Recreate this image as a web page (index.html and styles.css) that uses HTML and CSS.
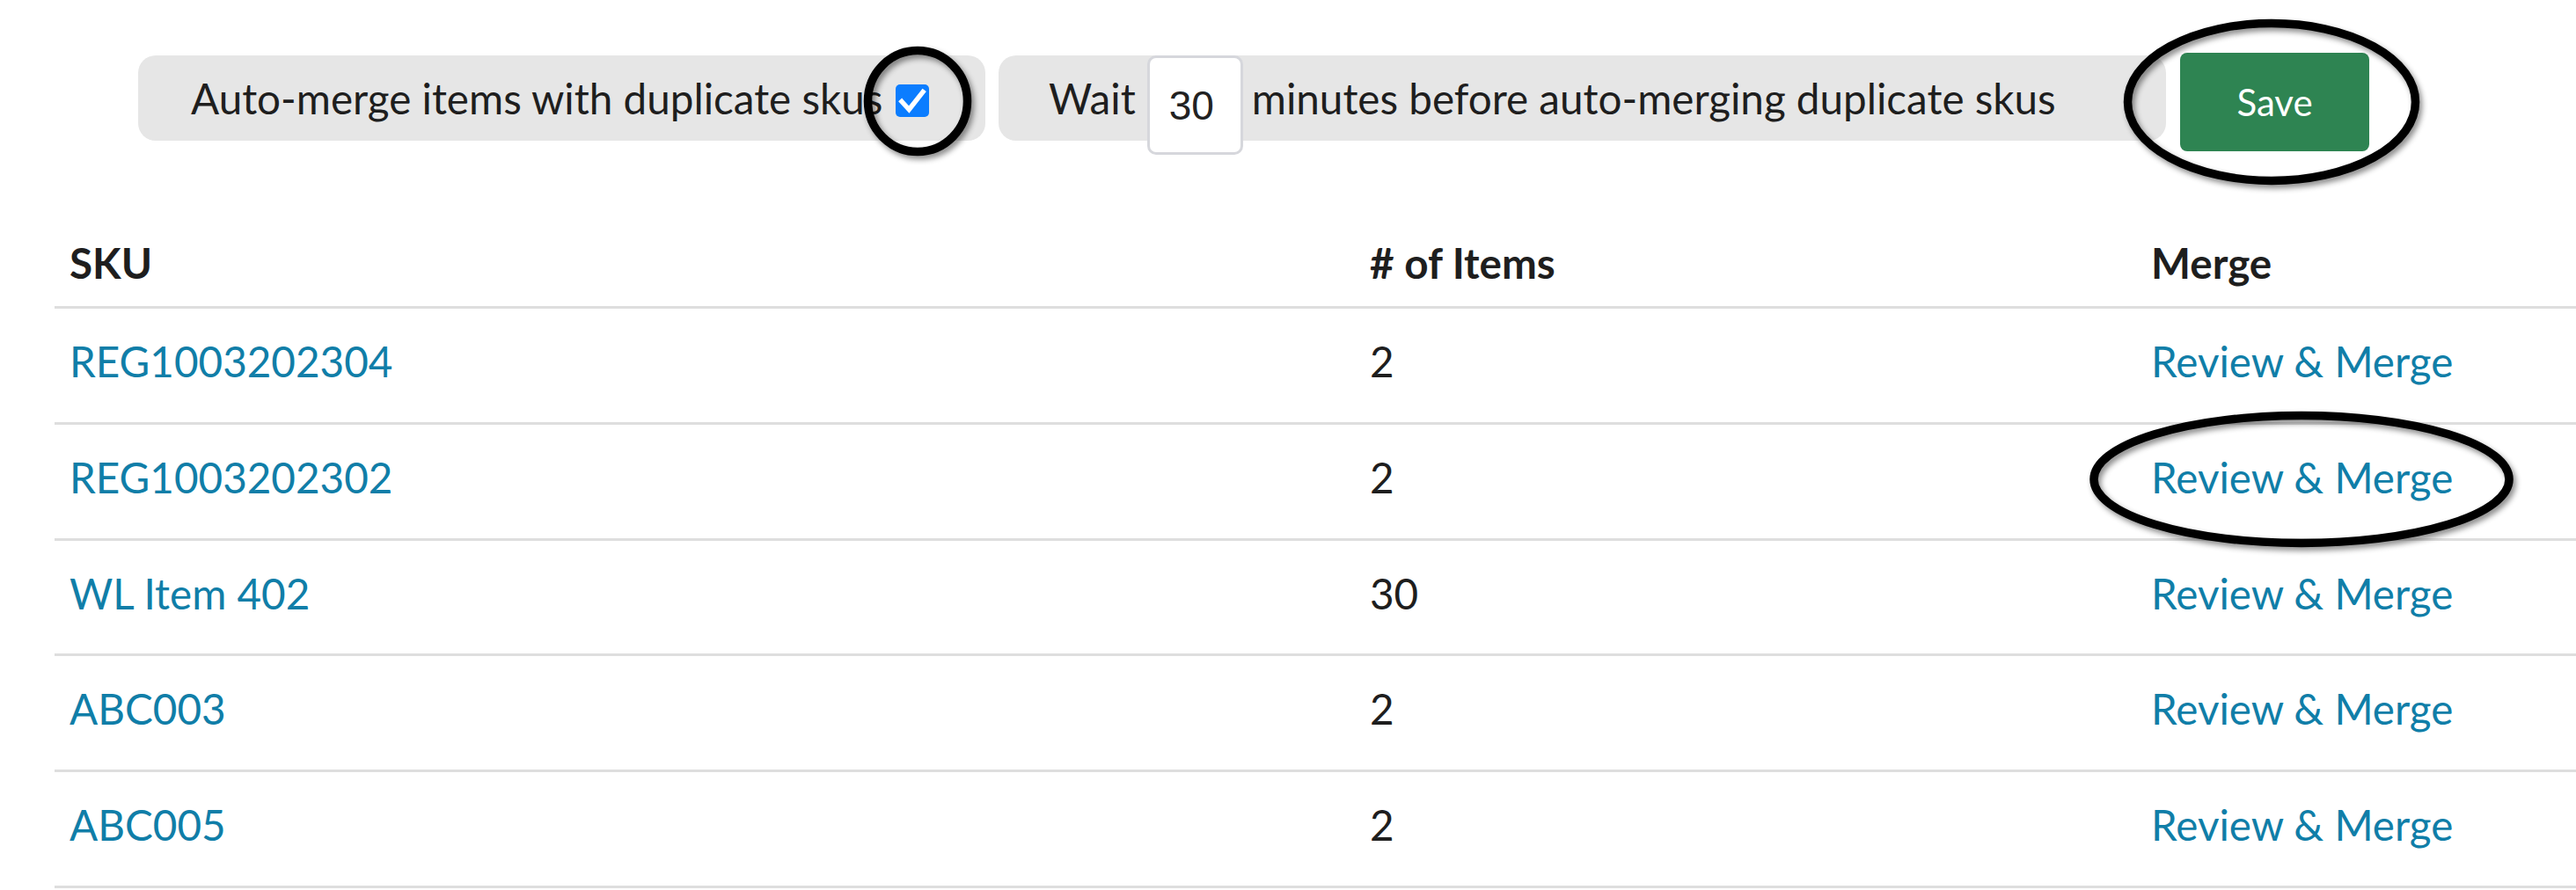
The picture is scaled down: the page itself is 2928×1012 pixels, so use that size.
FILE: index.html
```html
<!DOCTYPE html>
<html lang="en">
<head>
<meta charset="utf-8">
<title>Duplicate SKUs</title>
<link rel="stylesheet" href="styles.css">
</head>
<body>
<div class="page">
  <div class="toolbar">
    <label class="pill pill-auto">
      <span class="pill-text">Auto-merge items with duplicate skus</span>
      <span class="checkbox" role="checkbox" aria-checked="true">
        <svg viewBox="0 0 38 37" width="38" height="37"><path d="M7 19.5 L15.3 28.5 L31 8.5" fill="none" stroke="#fff" stroke-width="5.5" stroke-linecap="square" stroke-linejoin="miter"/></svg>
      </span>
    </label>
    <div class="pill pill-wait">
      <span class="pill-text">Wait</span>
      <input class="minutes" type="text" value="30">
      <span class="pill-text pill-text-after">minutes before auto-merging duplicate skus</span>
    </div>
    <button class="save" type="button">Save</button>
  </div>

  <table class="skus">
    <colgroup>
      <col class="c-sku">
      <col class="c-count">
      <col class="c-merge">
    </colgroup>
    <thead>
      <tr><th>SKU</th><th># of Items</th><th>Merge</th></tr>
    </thead>
    <tbody>
      <tr><td><a href="#">REG1003202304</a></td><td>2</td><td><a href="#">Review &amp; Merge</a></td></tr>
      <tr><td><a href="#">REG1003202302</a></td><td>2</td><td><a href="#">Review &amp; Merge</a></td></tr>
      <tr><td><a href="#">WL Item 402</a></td><td>30</td><td><a href="#">Review &amp; Merge</a></td></tr>
      <tr><td><a href="#">ABC003</a></td><td>2</td><td><a href="#">Review &amp; Merge</a></td></tr>
      <tr><td><a href="#">ABC005</a></td><td>2</td><td><a href="#">Review &amp; Merge</a></td></tr>
    </tbody>
  </table>

  <svg class="mark mark-check" width="140" height="140" viewBox="0 0 140 140"><ellipse cx="61" cy="62" rx="56.5" ry="57.5"/></svg>
  <svg class="mark mark-save" width="350" height="205" viewBox="0 0 350 205"><ellipse cx="168" cy="94" rx="163.5" ry="89.5"/></svg>
  <svg class="mark mark-row" width="500" height="175" viewBox="0 0 500 175"><ellipse cx="241" cy="77" rx="236" ry="72.5"/></svg>
</div>
</body>
</html>
```

FILE: styles.css
```css
html, body {
  margin: 0;
  padding: 0;
  background: #ffffff;
}

body {
  font-family: Lato, "Open Sans", sans-serif;
  font-size: 47.6px;
  color: #1e1e1e;
  overflow: hidden;
}

.page {
  position: relative;
  width: 2928px;
  height: 1012px;
}

.toolbar {
  display: flex;
  align-items: flex-start;
  padding: 60px 0 0 157px;
  height: 116px;
}

.pill {
  display: flex;
  align-items: center;
  flex: none;
  height: 97px;
  margin-top: 3px;
  background: #e6e6e6;
  border-radius: 20px;
  box-sizing: border-box;
}

.pill-auto {
  width: 963px;
  padding: 0 0 0 60px;
  gap: 15px;
}

.pill-wait {
  width: 1327px;
  margin-left: 15px;
  padding: 0 0 0 57px;
}

.pill-text {
  line-height: 72px;
  white-space: nowrap;
}

.pill-text-after {
  margin-left: 10px;
}

.checkbox {
  display: flex;
  width: 38px;
  height: 37px;
  background: #0b7dff;
  border-radius: 5px;
  margin-top: 5px;
}

.minutes {
  align-self: flex-start;
  margin: 0 0 0 13px;
  width: 109px;
  height: 113px;
  box-sizing: border-box;
  border: 3px solid #d6d7dc;
  border-radius: 10px;
  background: #ffffff;
  padding: 0 0 0 22px;
  font-family: "Liberation Sans", Arial, sans-serif;
  font-size: 46px;
  color: #222222;
  outline: none;
}

.save {
  flex: none;
  margin-left: 16px;
  width: 215px;
  height: 112px;
  border: 0;
  border-radius: 8px;
  background: #2e8452;
  color: #ffffff;
  font-family: Lato, sans-serif;
  font-size: 42px;
  padding: 0;
}

.skus {
  margin: 63.4px 0 0 62px;
  width: 2866px;
  border-collapse: collapse;
  table-layout: fixed;
}

.c-sku { width: 1478px; }
.c-count { width: 888px; }
.c-merge { width: 500px; }

.skus th {
  text-align: left;
  font-weight: 700;
  line-height: 72px;
  padding: 24px 17px 12.6px;
  border-bottom: 3px solid #dedede;
}

.skus td {
  line-height: 72px;
  padding: 24px 17px 32.8px;
  border-bottom: 3px solid #dedede;
  white-space: nowrap;
}

.skus a {
  color: #107ea8;
  text-decoration: none;
}

.mark {
  position: absolute;
  overflow: visible;
  filter: drop-shadow(3px 4px 3px rgba(0, 0, 0, 0.45));
}

.mark ellipse {
  fill: none;
  stroke: #000000;
  stroke-width: 9.5px;
}

.mark-check { left: 982px; top: 53px; }
.mark-save { left: 2414px; top: 22px; }
.mark-row { left: 2375px; top: 468px; }
```
